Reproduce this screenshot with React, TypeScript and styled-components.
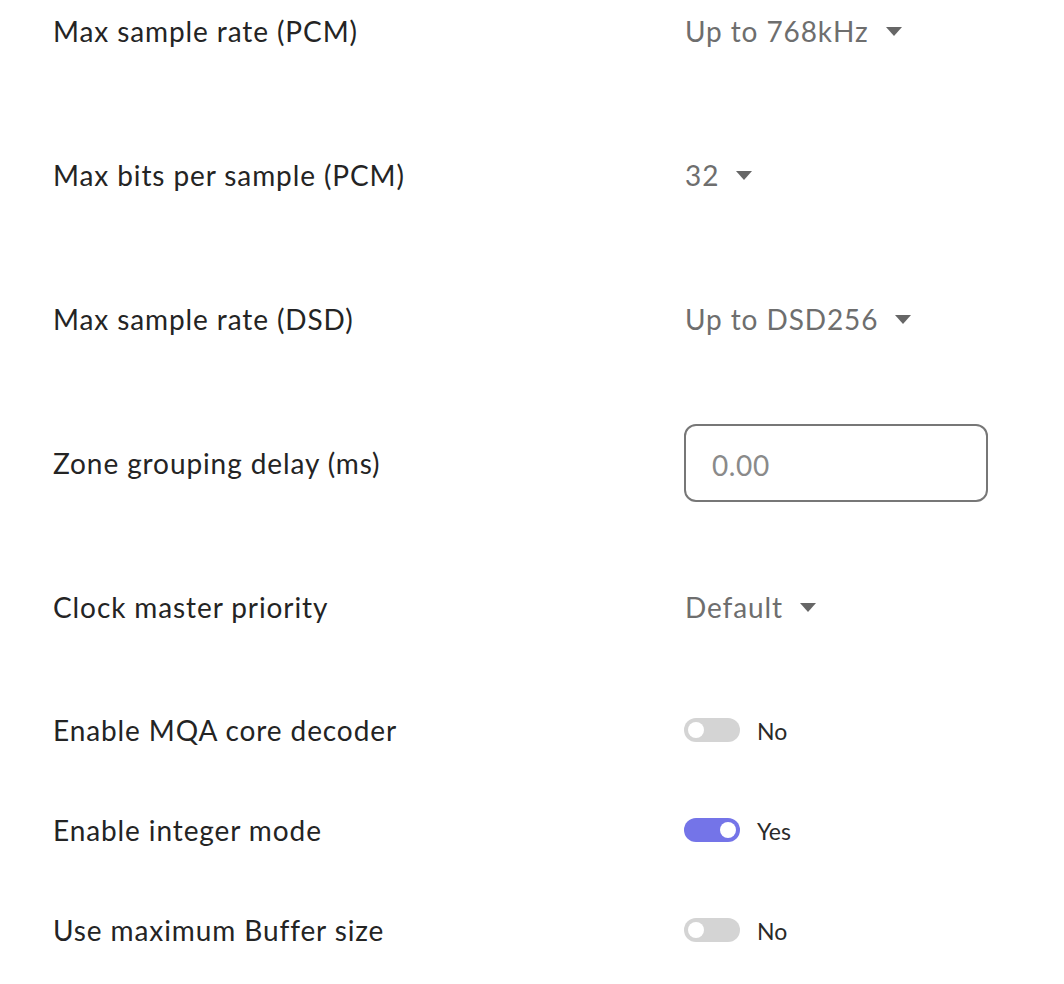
import React from "react";
import styled, { createGlobalStyle } from "styled-components";

const Global = createGlobalStyle`
  html, body { margin: 0; padding: 0; background: #ffffff; }
  body { font-family: Lato, "Open Sans", sans-serif; }
`;

const Page = styled.div`
  width: 1064px;
  height: 984px;
  overflow: hidden;
  background: #fff;
  padding-left: 53px;
  box-sizing: border-box;
`;

const List = styled.div`
  display: flex;
  flex-direction: column;
`;

const Row = styled.div<{ $top: number; $h: number }>`
  display: grid;
  grid-template-columns: 631px 1fr;
  align-items: center;
  margin-top: ${(p) => p.$top}px;
  height: ${(p) => p.$h}px;
`;

const Label = styled.div`
  font-size: 28px;
  color: #242424;
  letter-spacing: 0.9px;
`;

const Dropdown = styled.div`
  display: flex;
  align-items: center;
  gap: 17px;
  font-size: 28px;
  letter-spacing: 0.9px;
  color: #6e6e6e;
  padding-left: 1px;
`;

const Caret = styled.span`
  width: 0;
  height: 0;
  border-left: 8px solid transparent;
  border-right: 8px solid transparent;
  border-top: 9px solid #666;
  margin-top: 1px;
`;

const Input = styled.div`
  width: 304px;
  height: 78px;
  box-sizing: border-box;
  border: 2px solid #777;
  border-radius: 12px;
  display: flex;
  align-items: center;
  padding-left: 26px;
  padding-top: 3px;
  font-size: 28px;
  letter-spacing: 0.6px;
  color: #8a8a8a;
`;

const ToggleWrap = styled.div`
  display: flex;
  align-items: center;
  gap: 17px;
`;

const Track = styled.span<{ $on: boolean }>`
  position: relative;
  width: 56px;
  height: 24px;
  border-radius: 12px;
  background: ${(p) => (p.$on ? "#7474e8" : "#d4d4d4")};
`;

const Knob = styled.span<{ $on: boolean }>`
  position: absolute;
  top: 4px;
  left: ${(p) => (p.$on ? "36px" : "4px")};
  width: 16px;
  height: 16px;
  border-radius: 50%;
  background: #fff;
`;

const ToggleText = styled.span`
  font-size: 23px;
  color: #2a2a2a;
  margin-top: 2px;
`;

type Item =
  | { kind: "dd"; label: string; value: string; top: number; h: number }
  | { kind: "input"; label: string; value: string; top: number; h: number }
  | { kind: "toggle"; label: string; on: boolean; top: number; h: number };

const items: Item[] = [
  { kind: "dd", label: "Max sample rate (PCM)", value: "Up to 768kHz", top: 11, h: 40 },
  { kind: "dd", label: "Max bits per sample (PCM)", value: "32", top: 104, h: 40 },
  { kind: "dd", label: "Max sample rate (DSD)", value: "Up to DSD256", top: 104, h: 40 },
  { kind: "input", label: "Zone grouping delay (ms)", value: "0.00", top: 85, h: 78 },
  { kind: "dd", label: "Clock master priority", value: "Default", top: 85, h: 40 },
  { kind: "toggle", label: "Enable MQA core decoder", on: false, top: 83, h: 40 },
  { kind: "toggle", label: "Enable integer mode", on: true, top: 60, h: 40 },
  { kind: "toggle", label: "Use maximum Buffer size", on: false, top: 60, h: 40 },
];

export default function App() {
  return (
    <>
      <Global />
      <Page>
        <List>
          {items.map((it) => (
            <Row key={it.label} $top={it.top} $h={it.h}>
              <Label>{it.label}</Label>
              {it.kind === "dd" && (
                <Dropdown>
                  {it.value}
                  <Caret />
                </Dropdown>
              )}
              {it.kind === "input" && <Input>{it.value}</Input>}
              {it.kind === "toggle" && (
                <ToggleWrap>
                  <Track $on={it.on}>
                    <Knob $on={it.on} />
                  </Track>
                  <ToggleText>{it.on ? "Yes" : "No"}</ToggleText>
                </ToggleWrap>
              )}
            </Row>
          ))}
        </List>
      </Page>
    </>
  );
}
